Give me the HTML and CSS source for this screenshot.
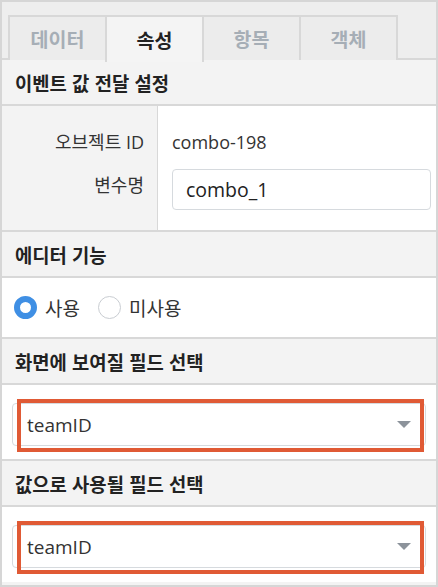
FILE: index.html
```html
<!DOCTYPE html>
<html lang="ko">
<head>
<meta charset="utf-8">
<link rel="stylesheet" href="styles.css">
</head>
<body>
<div class="panel">
  <div class="tabs">
    <div class="tab">데이터</div>
    <div class="tab active">속성</div>
    <div class="tab">항목</div>
    <div class="tab">객체</div>
  </div>

  <div class="sec-head">이벤트 값 전달 설정</div>
  <div class="props">
    <div class="labels">
      <div class="lbl lbl-1">오브젝트 ID</div>
      <div class="lbl lbl-2">변수명</div>
    </div>
    <div class="values">
      <div class="val">combo-198</div>
      <div class="input">combo_1</div>
    </div>
  </div>

  <div class="sec-head">에디터 기능</div>
  <div class="radio-row">
    <label class="radio"><span class="dot checked"></span>사용</label>
    <label class="radio"><span class="dot"></span>미사용</label>
  </div>

  <div class="sec-head">화면에 보여질 필드 선택</div>
  <div class="select-row">
    <div class="select"><span>teamID</span><span class="caret"></span></div>
    <div class="highlight"></div>
  </div>

  <div class="sec-head">값으로 사용될 필드 선택</div>
  <div class="select-row last">
    <div class="select"><span>teamID</span><span class="caret"></span></div>
    <div class="highlight"></div>
  </div>
</div>
</body>
</html>
```

FILE: styles.css
```css
* { box-sizing: border-box; }
html, body { margin: 0; padding: 0; background: #ffffff; }
body {
  font-family: "Open Sans", "Noto Sans CJK KR", sans-serif;
  font-size: 18px;
  color: #333333;
}
.panel {
  width: 438px;
  height: 587px;
  border: 2px solid #d6d6d6;
  background: #f3f3f3;
  display: flex;
  flex-direction: column;
  overflow: hidden;
}
.tabs {
  display: flex;
  padding: 13px 0 0 6px;
  background: #eeeeee;
  border-bottom: 2px solid #d8d8d8;
  height: 58px;
}
.tab {
  width: 99px;
  height: 45px;
  margin-right: -2px;
  border: 2px solid #d8d8d8;
  border-bottom: none;
  background: #ececec;
  color: #a6aeb6;
  font-family: "Noto Sans CJK KR", sans-serif;
  font-weight: 700;
  font-size: 19.5px;
  display: flex;
  align-items: center;
  justify-content: center;
}
.tab.active {
  background: #f4f4f4;
  color: #222222;
  height: 47px;
  margin-bottom: -2px;
  position: relative;
}
.sec-head {
  height: 46px;
  padding-left: 13px;
  display: flex;
  align-items: center;
  background: #f3f3f3;
  border-bottom: 2px solid #d8d8d8;
  font-family: "Noto Sans CJK KR", sans-serif;
  font-weight: 700;
  font-size: 18.8px;
  color: #222222;
}
.props {
  display: flex;
  height: 126px;
  border-bottom: 2px solid #d8d8d8;
}
.labels {
  width: 156px;
  background: #f3f3f3;
  border-right: 1px solid #d8d8d8;
  padding: 20px 13px 0 0;
  text-align: right;
}
.lbl { height: 32px; line-height: 32px; }
.lbl-2 { margin-top: 11px; }
.values {
  flex: 1;
  background: #ffffff;
  padding: 20px 5px 0 14px;
}
.val { height: 32px; line-height: 32px; }
.input {
  margin-top: 11px;
  height: 41px;
  border: 1px solid #d6dade;
  border-radius: 4px;
  padding-left: 13px;
  line-height: 39px;
  color: #222222;
  font-size: 19.5px;
}
.radio-row {
  height: 61px;
  background: #ffffff;
  border-bottom: 2px solid #d8d8d8;
  display: flex;
  align-items: center;
  padding-left: 12px;
  gap: 18px;
  font-family: "Noto Sans CJK KR", sans-serif;
  font-size: 19px;
}
.radio {
  display: flex;
  align-items: center;
  gap: 8px;
}
.dot {
  width: 23px;
  height: 23px;
  border-radius: 50%;
  border: 1.5px solid #c9cdd2;
  background: #ffffff;
}
.dot.checked {
  border: 6px solid #3f8fe4;
}
.select-row {
  position: relative;
  height: 76px;
  background: #ffffff;
  border-bottom: 2px solid #d8d8d8;
  padding: 18px 10px 0 10px;
  font-size: 19px;
}
.select-row.last { height: 75px; border-bottom: none; }
.select {
  height: 43px;
  border: 1px solid #d6dade;
  border-radius: 4px;
  display: flex;
  align-items: center;
  justify-content: space-between;
  padding: 0 14px 0 14px;
  color: #333333;
}
.caret {
  width: 0;
  height: 0;
  border-left: 7px solid transparent;
  border-right: 7px solid transparent;
  border-top: 7px solid #8c939b;
}
.highlight {
  position: absolute;
  left: 15px;
  right: 12px;
  top: 14px;
  height: 53px;
  border: 4px solid #e05a35;
  pointer-events: none;
}
```
